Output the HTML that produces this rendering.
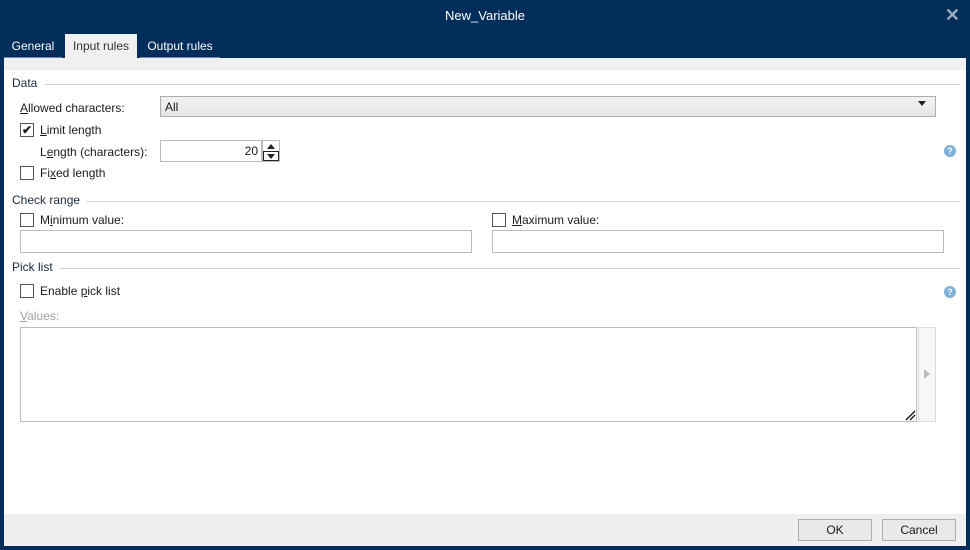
<!DOCTYPE html>
<html><head><style>
*{margin:0;padding:0;box-sizing:border-box}
body{width:970px;height:550px;background:#002d5a;font-family:"Liberation Sans",sans-serif;font-size:12px;color:#1a1a1a;position:relative;overflow:hidden}
.a{position:absolute}
.title{left:0;top:0;width:970px;height:34px;color:#fff;font-size:13px;text-align:center;line-height:32px}
.x{right:10px;top:5px;color:#9aa9bb;font-size:18px;font-weight:bold}
.tab{top:34px;height:24px;line-height:24px;color:#fff;text-align:center;font-size:12px}
.tab.i{border-bottom:1px solid #6d8fb3}
.tab.act{background:#f0f0f0;color:#333}
.panel{left:4px;top:58px;width:962px;height:456px;background:#fff}
.strip{left:4px;top:58px;width:962px;height:12px;background:#f0f0f0}
.foot{left:4px;top:514px;width:962px;height:32px;background:#efefef}
.grp{color:#1a2a3a}
.line{height:1px;background:#d5d5d5}
.cb{width:14px;height:14px;border:1px solid #555;background:#fff}
.box{border:1px solid #bcbcbc;background:#fff}
.btn{border:1px solid #adadad;background:#e9e9e9;text-align:center;line-height:20px;font-size:12px}
.help{width:12px;height:12px;border-radius:50%;background:#7fb0d8;color:#fff;font-size:9px;font-weight:bold;text-align:center;line-height:12px}
u{text-decoration:underline}
</style></head><body>
<div class="a title">New_Variable</div>
<div class="a x">✕</div>
<div class="a tab i" style="left:4px;width:58px">General</div>
<div class="a tab act" style="left:65px;width:72px">Input rules</div>
<div class="a tab i" style="left:140px;width:80px">Output rules</div>
<div class="a panel"></div>
<div class="a strip"></div>

<div class="a grp" style="left:12px;top:76px">Data</div>
<div class="a line" style="left:45px;top:84px;width:915px"></div>
<div class="a" style="left:20px;top:101px"><u>A</u>llowed characters:</div>
<div class="a" style="left:160px;top:96px;width:776px;height:21px;border:1px solid #adadad;background:linear-gradient(#f2f2f2,#e5e5e5)"></div>
<div class="a" style="left:165px;top:100px">All</div>
<div class="a" style="left:918px;top:101px;width:0;height:0;border-left:4px solid transparent;border-right:4px solid transparent;border-top:5px solid #222"></div>
<div class="a cb" style="left:20px;top:123px;font-size:12px;line-height:12px;text-align:center;font-weight:bold">✔</div>
<div class="a" style="left:40px;top:123px"><u>L</u>imit length</div>
<div class="a" style="left:40px;top:145px">L<u>e</u>ngth (characters):</div>
<div class="a box" style="left:160px;top:140px;width:102px;height:22px;text-align:right;padding-right:3px;line-height:20px">20</div>
<div class="a" style="left:262px;top:140px;width:18px;height:22px;border:1px solid #bcbcbc;background:#fff"></div>
<div class="a" style="left:267px;top:144px;border-left:4px solid transparent;border-right:4px solid transparent;border-bottom:5px solid #222"></div>
<div class="a" style="left:263px;top:151px;width:16px;height:10px;border:1px solid #222"></div>
<div class="a" style="left:267px;top:154px;border-left:4px solid transparent;border-right:4px solid transparent;border-top:5px solid #222"></div>
<div class="a help" style="left:944px;top:145px">?</div>
<div class="a cb" style="left:20px;top:166px"></div>
<div class="a" style="left:40px;top:166px">Fi<u>x</u>ed length</div>

<div class="a grp" style="left:12px;top:193px">Check range</div>
<div class="a line" style="left:86px;top:201px;width:874px"></div>
<div class="a cb" style="left:20px;top:213px"></div>
<div class="a" style="left:40px;top:213px">M<u>i</u>nimum value:</div>
<div class="a box" style="left:20px;top:230px;width:452px;height:23px"></div>
<div class="a cb" style="left:492px;top:213px"></div>
<div class="a" style="left:512px;top:213px"><u>M</u>aximum value:</div>
<div class="a box" style="left:492px;top:230px;width:452px;height:23px"></div>

<div class="a grp" style="left:12px;top:260px">Pick list</div>
<div class="a line" style="left:59px;top:268px;width:901px"></div>
<div class="a cb" style="left:20px;top:284px"></div>
<div class="a" style="left:40px;top:284px">Enable <u>p</u>ick list</div>
<div class="a help" style="left:944px;top:286px">?</div>
<div class="a" style="left:20px;top:309px;color:#a0a0a0"><u>V</u>alues:</div>
<div class="a box" style="left:20px;top:327px;width:897px;height:95px"></div>
<svg class="a" style="left:904px;top:409px" width="12" height="12"><path d="M2 11L11 2M6 11L11 6" stroke="#111" stroke-width="1.3"/></svg>
<div class="a" style="left:918px;top:327px;width:18px;height:95px;border:1px solid #dcdcdc;background:#f7f7f7"></div>
<div class="a" style="left:924px;top:369px;border-top:5px solid transparent;border-bottom:5px solid transparent;border-left:6px solid #bdbdbd"></div>

<div class="a foot"></div>
<div class="a btn" style="left:798px;top:519px;width:74px;height:22px">OK</div>
<div class="a btn" style="left:882px;top:519px;width:74px;height:22px">Cancel</div>
</body></html>
